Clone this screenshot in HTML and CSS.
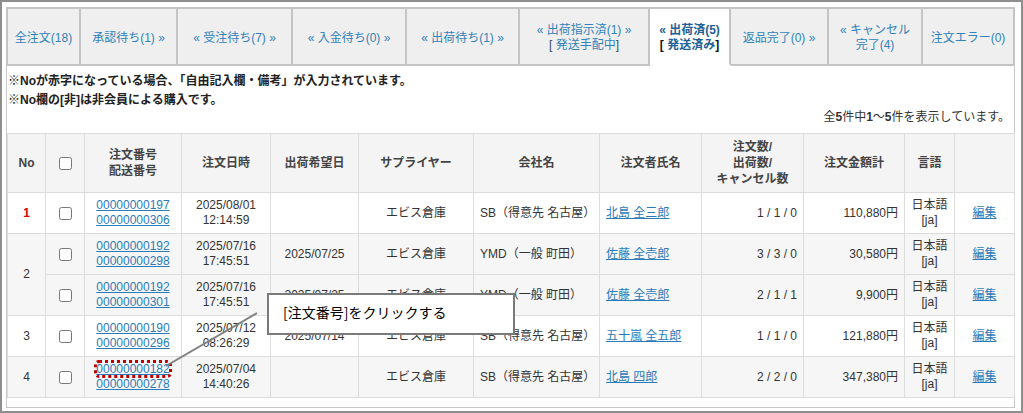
FILE: index.html
```html
<!DOCTYPE html>
<html lang="ja">
<head>
  <meta charset="UTF-8" />
  <meta name="viewport" content="width=device-width, initial-scale=1.0" />
  <title>受注管理 - 出荷済</title>
  <link rel="stylesheet" href="styles.css">
</head>
<body>
  <div class="frame">
    <!-- ステータスタブ -->
    <ul class="tabs">
      <li class="tab t1"><a href="#">全注文(18)</a></li>
      <li class="tab t2"><a href="#">承認待ち(1) »</a></li>
      <li class="tab t3"><a href="#">« 受注待ち(7) »</a></li>
      <li class="tab t4"><a href="#">« 入金待ち(0) »</a></li>
      <li class="tab t5"><a href="#">« 出荷待ち(1) »</a></li>
      <li class="tab t6"><a href="#">« 出荷指示済(1) »<br /><span class="br">[</span> 発送手配中<span class="br">]</span></a></li>
      <li class="tab t7 active"><a href="#">« 出荷済(5)<br /><span class="br">[</span> 発送済み<span class="br">]</span></a></li>
      <li class="tab t8"><a href="#">返品完了(0) »</a></li>
      <li class="tab t9"><a href="#">« キャンセル<br />完了(4)</a></li>
      <li class="tab t10"><a href="#">注文エラー(0)</a></li>
    </ul>

    <div class="panel">
      <div class="notes">
        <p>※Noが赤字になっている場合、「自由記入欄・備考」が入力されています。</p>
        <p>※No欄の[非]は非会員による購入です。</p>
      </div>
      <div class="count">全<b>5</b>件中<b>1</b>〜<b>5</b>件を表示しています。</div>

      <table class="orders">
        <colgroup>
          <col class="w-no" />
          <col class="w-check" />
          <col class="w-order" />
          <col class="w-date" />
          <col class="w-wish" />
          <col class="w-supplier" />
          <col class="w-company" />
          <col class="w-name" />
          <col class="w-qty" />
          <col class="w-amount" />
          <col class="w-lang" />
          <col class="w-edit" />
        </colgroup>
        <thead>
          <tr>
            <th>No</th>
            <th><input type="checkbox" /></th>
            <th>注文番号<br />配送番号</th>
            <th>注文日時</th>
            <th>出荷希望日</th>
            <th>サプライヤー</th>
            <th>会社名</th>
            <th>注文者氏名</th>
            <th>注文数/<br />出荷数/<br />キャンセル数</th>
            <th>注文金額計</th>
            <th>言語</th>
            <th></th>
          </tr>
        </thead>
        <tbody>
          <tr>
            <td class="c no-red">1</td>
            <td class="c"><input type="checkbox" /></td>
            <td class="c"><a href="#">00000000197</a><br /><a href="#">00000000306</a></td>
            <td class="c">2025/08/01<br />12:14:59</td>
            <td class="c"></td>
            <td class="c">エビス倉庫</td>
            <td>SB（得意先 名古屋）</td>
            <td><a href="#">北島 全三郎</a></td>
            <td class="r">1 / 1 / 0</td>
            <td class="r">110,880円</td>
            <td class="c">日本語<br />[ja]</td>
            <td class="c"><a href="#">編集</a></td>
          </tr>
          <tr class="alt">
            <td class="c" rowspan="2">2</td>
            <td class="c"><input type="checkbox" /></td>
            <td class="c"><a href="#">00000000192</a><br /><a href="#">00000000298</a></td>
            <td class="c">2025/07/16<br />17:45:51</td>
            <td class="c">2025/07/25</td>
            <td class="c">エビス倉庫</td>
            <td>YMD（一般 町田）</td>
            <td><a href="#">佐藤 全壱郎</a></td>
            <td class="r">3 / 3 / 0</td>
            <td class="r">30,580円</td>
            <td class="c">日本語<br />[ja]</td>
            <td class="c"><a href="#">編集</a></td>
          </tr>
          <tr class="alt">
            <td class="c"><input type="checkbox" /></td>
            <td class="c"><a href="#">00000000192</a><br /><a href="#">00000000301</a></td>
            <td class="c">2025/07/16<br />17:45:51</td>
            <td class="c">2025/07/25</td>
            <td class="c">エビス倉庫</td>
            <td>YMD（一般 町田）</td>
            <td><a href="#">佐藤 全壱郎</a></td>
            <td class="r">2 / 1 / 1</td>
            <td class="r">9,900円</td>
            <td class="c">日本語<br />[ja]</td>
            <td class="c"><a href="#">編集</a></td>
          </tr>
          <tr>
            <td class="c">3</td>
            <td class="c"><input type="checkbox" /></td>
            <td class="c"><a href="#">00000000190</a><br /><a href="#">00000000296</a></td>
            <td class="c">2025/07/12<br />08:26:29</td>
            <td class="c">2025/07/14</td>
            <td class="c">エビス倉庫</td>
            <td>SB（得意先 名古屋）</td>
            <td><a href="#">五十嵐 全五郎</a></td>
            <td class="r">1 / 1 / 0</td>
            <td class="r">121,880円</td>
            <td class="c">日本語<br />[ja]</td>
            <td class="c"><a href="#">編集</a></td>
          </tr>
          <tr class="alt">
            <td class="c">4</td>
            <td class="c"><input type="checkbox" /></td>
            <td class="c"><span class="mark"><a href="#">00000000182</a></span><br /><a href="#">00000000278</a></td>
            <td class="c">2025/07/04<br />14:40:26</td>
            <td class="c"></td>
            <td class="c">エビス倉庫</td>
            <td>SB（得意先 名古屋）</td>
            <td><a href="#">北島 四郎</a></td>
            <td class="r">2 / 2 / 0</td>
            <td class="r">347,380円</td>
            <td class="c">日本語<br />[ja]</td>
            <td class="c"><a href="#">編集</a></td>
          </tr>
        </tbody>
      </table>
    </div>

    <!-- 説明用の吹き出し -->
    <svg class="pointer" width="1019" height="409" viewBox="0 0 1019 409">
      <line x1="255" y1="311" x2="164" y2="364" stroke="#808080" stroke-width="2" />
    </svg>
    <div class="callout">[注文番号]をクリックする</div>
  </div>
</body>
</html>
```

FILE: styles.css
```css
* { box-sizing: border-box; }

body {
  margin: 0;
  background-color: #fff;
  font-family: "Liberation Sans", "Noto Sans CJK JP", sans-serif;
  font-size: 12px;
  color: #333;
}

a {
  color: #2b7bb9;
}

.frame {
  position: relative;
  width: 1023px;
  height: 413px;
  border: 2px solid #8e8e8e;
  padding: 5px 6px 4px 4px;
}

/* tabs */
.tabs {
  display: flex;
  list-style: none;
  margin: 0;
  padding: 0;
  height: 59px;
}

.tab {
  display: flex;
  align-items: center;
  justify-content: center;
  text-align: center;
  line-height: 15px;
  padding-top: 3px;
  background-color: #efefef;
  border: 2px solid #c4c4c4;
  border-left: none;
}

.tab:first-child {
  border-left: 2px solid #c4c4c4;
}

.tab a {
  color: #3282ba;
  text-decoration: none;
}

.tab .br {
  color: #3a4a5a;
}

.tab.active {
  background-color: #fff;
  border-bottom-color: transparent;
}

.tab.active a {
  color: #1f5f95;
  font-weight: bold;
}

.tab.active .br {
  color: #111;
}

.t1 { width: 75px; }
.t2 { width: 97px; }
.t3 { width: 115px; }
.t4 { width: 114px; }
.t5 { width: 113px; }
.t6 { width: 130px; }
.t7 { width: 81px; }
.t8 { width: 98px; }
.t9 { width: 94px; }
.t10 { width: 92px; }

/* panel */
.panel {
  border: 1px solid #c8c8c8;
  border-top: none;
  padding: 6px 0 9px 0;
}

.notes p {
  margin: 0;
  padding-left: 1px;
  line-height: 19px;
  font-weight: bold;
  color: #222;
}

.count {
  text-align: right;
  line-height: 14px;
  padding-right: 4px;
  margin-bottom: 9px;
  color: #333;
}

.count b {
  font-weight: bold;
}

/* order table */
.orders {
  width: 1007px;
  border-collapse: collapse;
  table-layout: fixed;
  border: 1px solid #dcdcdc;
}

.orders th,
.orders td {
  border: 1px solid #dcdcdc;
  padding: 5px 6px;
  line-height: 15px;
  vertical-align: middle;
}

.orders th {
  background-color: #f4f4f4;
  color: #444;
  font-weight: bold;
  text-align: center;
  line-height: 16px;
}

.orders tbody tr {
  background-color: #fff;
}

.orders tbody tr.alt {
  background-color: #f6f6f6;
}

.orders input[type="checkbox"] {
  margin: 0;
  width: 13px;
  height: 13px;
  vertical-align: middle;
}

.orders .c { text-align: center; }
.orders .r { text-align: right; }

.orders .no-red {
  color: #e00000;
  font-weight: bold;
}

.w-no { width: 38px; }
.w-check { width: 39px; }
.w-order { width: 97px; }
.w-date { width: 89px; }
.w-wish { width: 88px; }
.w-supplier { width: 115px; }
.w-company { width: 126px; }
.w-name { width: 102px; }
.w-qty { width: 102px; }
.w-amount { width: 101px; }
.w-lang { width: 50px; }
.w-edit { width: 60px; }

.mark {
  outline: 3px dotted #c00000;
  outline-offset: -1px;
  border-radius: 3px;
}

/* callout */
.pointer {
  position: absolute;
  left: 0;
  top: 0;
  pointer-events: none;
}

.callout {
  position: absolute;
  left: 265px;
  top: 291px;
  width: 248px;
  height: 42px;
  display: flex;
  align-items: center;
  padding: 0 0 4px 14px;
  background-color: #fff;
  border: 2px solid #7a7a7a;
  font-family: "Noto Sans CJK JP", sans-serif;
  font-size: 14px;
  color: #000;
}
```
